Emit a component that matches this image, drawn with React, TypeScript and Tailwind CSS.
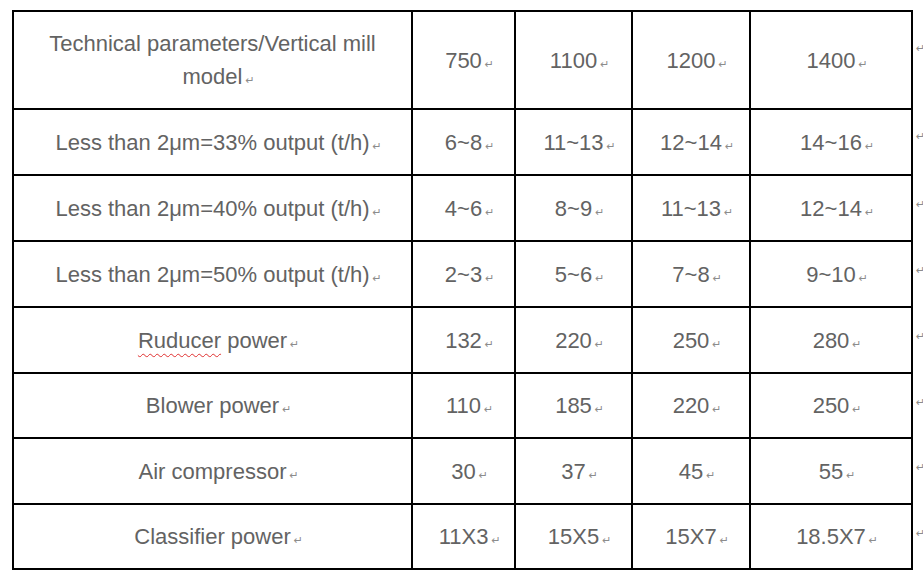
import React from "react";

const Mark = () => (
  <span className="inline-block w-0 whitespace-nowrap align-baseline">
    <span className="ml-[3px] text-[11px] leading-none text-[#8c8c8c] [font-family:'DejaVu_Sans',sans-serif]">↵</span>
  </span>
);

type Row = { label: React.ReactNode; vals: string[]; h: string };

const rows: Row[] = [
  {
    label: (
      <>
        Technical parameters/Vertical mill
        <br />
        model
      </>
    ),
    vals: ["750", "1100", "1200", "1400"],
    h: "h-[96px]",
  },
  { label: "Less than 2μm=33% output (t/h)", vals: ["6~8", "11~13", "12~14", "14~16"], h: "h-[64px]" },
  { label: "Less than 2μm=40% output (t/h)", vals: ["4~6", "8~9", "11~13", "12~14"], h: "h-[64px]" },
  { label: "Less than 2μm=50% output (t/h)", vals: ["2~3", "5~6", "7~8", "9~10"], h: "h-[64px]" },
  {
    label: (
      <>
        <span className="underline decoration-wavy decoration-[#e03030] decoration-1 underline-offset-[5px]">Ruducer</span> power
      </>
    ),
    vals: ["132", "220", "250", "280"],
    h: "h-[64px]",
  },
  { label: "Blower power", vals: ["110", "185", "220", "250"], h: "h-[63px]" },
  { label: "Air compressor", vals: ["30", "37", "45", "55"], h: "h-[64px]" },
  { label: "Classifier power", vals: ["11X3", "15X5", "15X7", "18.5X7"], h: "h-[63px]" },
];

const markTops = ["pt-[31px]", "pt-[21px]", "pt-[23px]", "pt-[23px]", "pt-[23px]", "pt-[23px]", "pt-[23px]", "pt-[23px]"];

export default function App() {
  return (
    <div className="w-[923px] h-[579px] bg-white overflow-hidden [font-family:'Liberation_Sans',Arial,sans-serif] text-[22px] text-[#636363]">
      <div className="flex pt-[10px] pl-[12px]">
        <div className="grid grid-cols-[397px_101px_115px_116px_160px] gap-[2px] bg-black p-[2px] w-[901px]">
          {rows.map((r, i) => (
            <React.Fragment key={i}>
              <div className={`bg-white ${r.h} flex items-center justify-center text-center leading-[33px]`}>
                <span>
                  {r.label}
                  <Mark />
                </span>
              </div>
              {r.vals.map((v, j) => (
                <div key={j} className={`bg-white ${r.h} flex items-center justify-center leading-[33px]`}>
                  <span>
                    {v}
                    <Mark />
                  </span>
                </div>
              ))}
            </React.Fragment>
          ))}
        </div>
        <div className="flex flex-col pt-[2px] pl-[3px]">
          {rows.map((r, i) => (
            <div key={i} className={`${r.h} mb-[2px] ${markTops[i]} text-[11px] leading-none text-[#8c8c8c] [font-family:'DejaVu_Sans',sans-serif]`}>
              ↵
            </div>
          ))}
        </div>
      </div>
    </div>
  );
}
